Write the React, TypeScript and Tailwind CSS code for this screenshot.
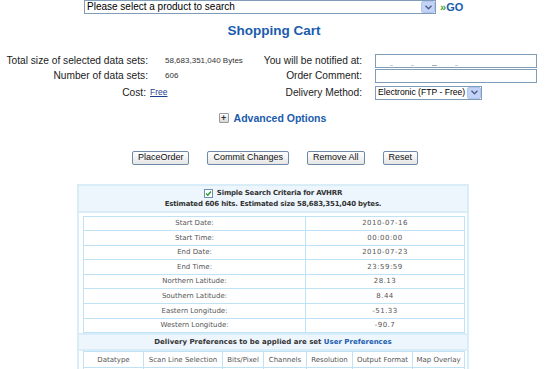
import React from "react";

const verdana = { fontFamily: '"DejaVu Sans", Verdana, sans-serif' };

function FakeSelect({ label, width, textSize = "text-[10px]" }: { label: string; width: string; textSize?: string }) {
  return (
    <div className={`${width} h-[14px] flex items-center border border-[#7f9db9] bg-white`}>
      <span className={`flex-1 pl-[2px] ${textSize} text-black leading-none whitespace-nowrap overflow-hidden`}>{label}</span>
      <span className="w-[14px] h-[12px] shrink-0 flex items-center justify-center rounded-[2px] bg-[#c3d3f7] border border-[#b0c4ef]">
        <svg width="7" height="5" viewBox="0 0 7 5">
          <path d="M0.5 0.8 L3.5 3.8 L6.5 0.8" fill="none" stroke="#4d6185" strokeWidth="1.4" />
        </svg>
      </span>
    </div>
  );
}

function Btn({ children }: { children: React.ReactNode }) {
  return (
    <button className="h-[14px] px-[5px] border border-[#6f8aa8] rounded-[2px] bg-gradient-to-b from-white to-[#e6e6e6] text-[9px] leading-none text-[#111]">
      {children}
    </button>
  );
}

const criteria: [string, string][] = [
  ["Start Date:", "2010-07-16"],
  ["Start Time:", "00:00:00"],
  ["End Date:", "2010-07-23"],
  ["End Time:", "23:59:59"],
  ["Northern Latitude:", "28.13"],
  ["Southern Latitude:", "8.44"],
  ["Eastern Longitude:", "-51.33"],
  ["Western Longitude:", "-90.7"],
];

const prefCols = [
  ["Datatype", "w-[60px]"],
  ["Scan Line Selection", "w-[79px]"],
  ["Bits/Pixel", "w-[41px]"],
  ["Channels", "w-[43px]"],
  ["Resolution", "w-[46px]"],
  ["Output Format", "w-[60px]"],
  ["Map Overlay", "w-[52px]"],
];

export default function App() {
  return (
    <div className="w-[548px] h-[369px] overflow-hidden bg-white text-[#222]" style={{ fontFamily: '"Liberation Sans", Arial, sans-serif' }}>
      {/* product picker */}
      <div className="flex items-center pl-[84px] h-[14px]">
        <FakeSelect label="Please select a product to search" width="w-[352px]" />
        <span className="ml-[4px] text-[11px] font-bold leading-none">
          <span className="text-[#3aa33a]">»</span>
          <span className="text-[#1a5cad]">GO</span>
        </span>
      </div>

      <div className="mt-[9px] text-center text-[13.5px] font-bold text-[#1a5cad] leading-[16px]">Shopping Cart</div>

      {/* order summary */}
      <div className="mt-[15px] flex flex-col gap-[1px] text-[10.2px] text-[#222]">
        <div className="flex items-center h-[14px]">
          <div className="w-[148px] text-right">Total size of selected data sets:</div>
          <div className="w-[97px] ml-[17px] text-[8px] text-[#333]">58,683,351,040 Bytes</div>
          <div className="w-[100px] text-right">You will be notified at:</div>
          <div className="ml-[13px] w-[162px] h-[14px] border border-[#7f9db9] bg-white flex items-end pl-[14px] pb-[1px] gap-[18px]">
            <span className="w-[3px] h-[1px] bg-[#ccc]" />
            <span className="w-[3px] h-[1px] bg-[#ccc]" />
            <span className="w-[5px] h-[1px] bg-[#aaa]" />
            <span className="w-[3px] h-[1px] bg-[#ccc]" />
          </div>
        </div>
        <div className="flex items-center h-[14px]">
          <div className="w-[148px] text-right">Number of data sets:</div>
          <div className="w-[97px] ml-[17px] text-[8px] text-[#333]">606</div>
          <div className="w-[100px] text-right">Order Comment:</div>
          <div className="ml-[13px] w-[162px] h-[14px] border border-[#7f9db9] bg-white" />
        </div>
        <div className="flex items-center h-[15px] mt-[1px]">
          <div className="w-[146px] text-right">Cost:</div>
          <div className="w-[99px] ml-[4px] text-[8.5px] text-[#1a3f8f] underline">Free</div>
          <div className="w-[113px] text-right">Delivery Method:</div>
          <div className="ml-[13px]">
            <FakeSelect label="Electronic (FTP - Free)" width="w-[107px]" textSize="text-[8.6px]" />
          </div>
        </div>
      </div>

      {/* advanced options */}
      <div className="mt-[13px] flex items-center justify-center gap-[5px] pr-[3px]">
        <span className="w-[10px] h-[10px] flex items-center justify-center border border-[#9a9a9a] rounded-[1px] bg-gradient-to-b from-white to-[#d8d8d8] text-[9px] leading-none font-bold text-[#333]">
          +
        </span>
        <span className="text-[10.5px] font-bold text-[#1a5cad] leading-none">Advanced Options</span>
      </div>

      {/* actions */}
      <div className="mt-[27px] flex justify-center gap-[18px] pl-[2px]">
        <Btn>PlaceOrder</Btn>
        <Btn>Commit Changes</Btn>
        <Btn>Remove All</Btn>
        <Btn>Reset</Btn>
      </div>

      {/* search criteria */}
      <div className="mt-[19px] ml-[77px] w-[392px] border-x-2 border-t-2 border-[#d9edf9] text-[#555]" style={verdana}>
        <div className="bg-[#eef6fd] border-b-2 border-[#d9edf9] pt-[3px] pb-[2px] text-center font-bold text-[7px] leading-[9px] text-[#333] tracking-[-0.2px]">
          <div className="flex items-center justify-center gap-[4px]">
            <span className="w-[9px] h-[9px] border border-[#6b8fb3] bg-white flex items-center justify-center">
              <svg width="7" height="7" viewBox="0 0 7 7">
                <path d="M1 3.5 L2.8 5.3 L6 1.5" fill="none" stroke="#2f9a2f" strokeWidth="1.4" />
              </svg>
            </span>
            <span>Simple Search Criteria for AVHRR</span>
          </div>
          <div className="mt-[2px]">Estimated 606 hits. Estimated size 58,683,351,040 bytes.</div>
        </div>

        <div className="px-[4px] pt-[3px]">
          <table className="w-[382px] border-collapse text-[7px]">
            <tbody>
              {criteria.map(([k, v]) => (
                <tr key={k} className="h-[14.6px]">
                  <td className="w-[222px] border border-[#bfe2f6] text-center">{k}</td>
                  <td className="border border-[#bfe2f6] text-center tracking-[0.5px]">{v}</td>
                </tr>
              ))}
            </tbody>
          </table>
        </div>

        <div className="bg-[#eef6fd] border-y-2 border-[#d9edf9] h-[18px] flex items-center justify-center font-bold text-[7px] text-[#333]">
          Delivery Preferences to be applied are set&nbsp;<span className="text-[#1a5cad]">User Preferences</span>
        </div>

        <div className="px-[4px]">
          <table className="w-[382px] border-collapse text-[7px]">
            <tbody>
              <tr className="h-[16px]">
                {prefCols.map(([c, w]) => (
                  <td key={c} className={`${w} border border-[#bfe2f6] text-center`}>
                    {c}
                  </td>
                ))}
              </tr>
              <tr className="h-[14px]">
                {prefCols.map(([c]) => (
                  <td key={c} className="border border-[#bfe2f6]" />
                ))}
              </tr>
            </tbody>
          </table>
        </div>
      </div>
    </div>
  );
}
